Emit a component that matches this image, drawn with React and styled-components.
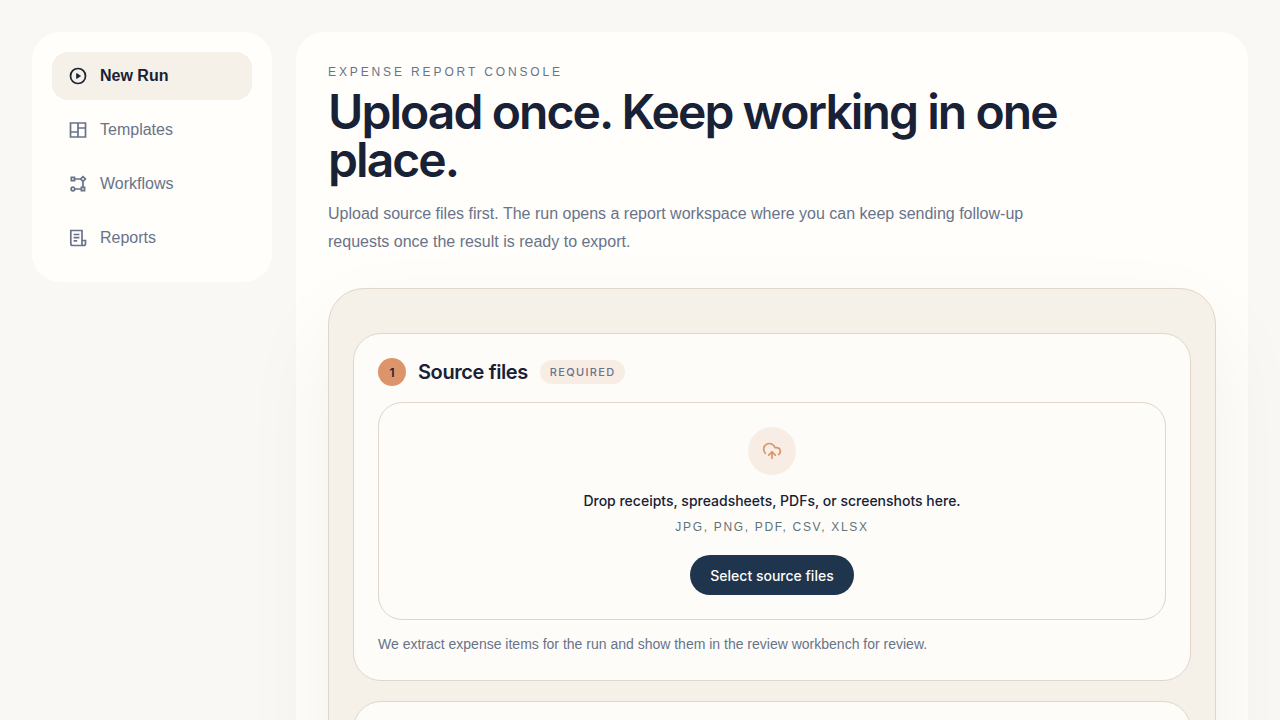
import styled, { createGlobalStyle } from "styled-components";
import { CloudUpload } from "lucide-react";

export default function NewRunPage() {
	return (
		<>
			<GlobalStyle />
			<Page>
				<Sidebar>
					<NavItem href="#new-run" $active aria-current="page">
						<RunIcon />
						New Run
					</NavItem>
					<NavItem href="#templates">
						<TemplatesIcon />
						Templates
					</NavItem>
					<NavItem href="#workflows">
						<WorkflowsIcon />
						Workflows
					</NavItem>
					<NavItem href="#reports">
						<ReportsIcon />
						Reports
					</NavItem>
				</Sidebar>
				<Main>
					<Eyebrow>Expense report console</Eyebrow>
					<Title>Upload once. Keep working in one place.</Title>
					<Intro>
						Upload source files first. The run opens a report workspace where you can keep sending follow-up
						requests once the result is ready to export.
					</Intro>
					<Steps>
						<Card>
							<CardHeader>
								<StepNumber>1</StepNumber>
								<h2>Source files</h2>
								<Tag>Required</Tag>
							</CardHeader>
							<DropZone>
								<UploadBadge>
									<CloudUpload size={20} strokeWidth={2} />
								</UploadBadge>
								<DropText>Drop receipts, spreadsheets, PDFs, or screenshots here.</DropText>
								<Formats>JPG, PNG, PDF, CSV, XLSX</Formats>
								<SelectButton type="button">Select source files</SelectButton>
							</DropZone>
							<Note>We extract expense items for the run and show them in the review workbench for review.</Note>
						</Card>
						<Card />
					</Steps>
				</Main>
			</Page>
		</>
	);
}

function RunIcon() {
	return (
		<NavIcon viewBox="0 0 20 20">
			<circle cx="10" cy="10" r="7.5" />
			<path d="M8.6 7.5v5l3.9-2.5z" fill="currentColor" strokeWidth="0.8" />
		</NavIcon>
	);
}

function TemplatesIcon() {
	return (
		<NavIcon viewBox="0 0 20 20">
			<path d="M2.5 3h15v14h-15zM10 3v14M2.5 12H10M10 8h7.5" />
		</NavIcon>
	);
}

function WorkflowsIcon() {
	return (
		<NavIcon viewBox="0 0 20 20">
			<path d="M3.3 3.4h3.2v3.2H3.3zM13.4 13.4h3.2v3.2h-3.2zM15 2.6 17.4 5 15 7.4 12.6 5zM6.5 5h6.1M15 7.4v6M6.6 15h6.8" />
			<circle cx="4.9" cy="15" r="1.8" />
		</NavIcon>
	);
}

function ReportsIcon() {
	return (
		<NavIcon viewBox="0 0 20 20">
			<path d="M14 12.5v-10H2.8v13c0 1.2.7 2 1.8 2h11.2M14 12.5h3.5v3.3c0 1-.7 1.7-1.7 1.7S14 16.8 14 15.8zM5.6 6.5h5.8M5.6 9.7h5.8M5.6 12.9h3.6" />
		</NavIcon>
	);
}

const GlobalStyle = createGlobalStyle`
	* {
		box-sizing: border-box;
		margin: 0;
	}
	body {
		background-color: #f9f8f4;
		color: #182135;
		font-family: "Liberation Sans", Arial, sans-serif;
		font-size: 16px;
		-webkit-font-smoothing: antialiased;
	}
`;

const Page = styled.div`
	display: flex;
	align-items: flex-start;
	gap: 24px;
	padding: 32px;
`;

const Sidebar = styled.nav`
	display: flex;
	flex-direction: column;
	flex: 0 0 240px;
	gap: 6px;
	padding: 20px;
	border-radius: 28px;
	background-color: #fffefa;
`;

const NavItem = styled.a`
	display: flex;
	align-items: center;
	gap: 12px;
	height: 48px;
	padding: 0 16px;
	border-radius: 16px;
	background-color: ${(props) => (props.$active ? "#f5f0e8" : "transparent")};
	color: ${(props) => (props.$active ? "#182135" : "#68738a")};
	font-weight: ${(props) => (props.$active ? 600 : 400)};
	text-decoration: none;
`;

const NavIcon = styled.svg`
	width: 20px;
	height: 20px;
	fill: none;
	stroke: currentColor;
	stroke-width: 1.7;
`;

const Main = styled.main`
	flex: 1;
	min-width: 0;
	padding: 32px;
	border-radius: 28px;
	background-color: #fffefa;
`;

const Eyebrow = styled.p`
	color: #68738a;
	font-size: 12px;
	line-height: 16px;
	letter-spacing: 0.24em;
	text-transform: uppercase;
`;

const Title = styled.h1`
	max-width: 768px;
	margin-top: 8px;
	font-family: Inter, "Liberation Sans", sans-serif;
	font-size: 48px;
	font-weight: 600;
	line-height: 48px;
	letter-spacing: -0.04em;
`;

const Intro = styled.p`
	max-width: 736px;
	margin-top: 16px;
	color: #68738a;
	line-height: 28px;
`;

const Steps = styled.section`
	display: flex;
	flex-direction: column;
	gap: 20px;
	margin-top: 32px;
	padding: 44px 24px 24px;
	border: 1px solid #e0d6ca;
	border-radius: 36px;
	background-color: #f5f0e8;
	box-shadow: 0 40px 96px rgba(24, 33, 53, 0.06);
`;

const Card = styled.div`
	min-height: 240px;
	padding: 24px;
	border: 1px solid #e0d6ca;
	border-radius: 28px;
	background-color: #fdfcf8;
`;

const CardHeader = styled.div`
	display: flex;
	align-items: center;
	gap: 12px;
	h2 {
		font-family: Inter, "Liberation Sans", sans-serif;
		font-size: 20px;
		font-weight: 600;
		line-height: 28px;
		letter-spacing: -0.02em;
	}
`;

const StepNumber = styled.span`
	display: flex;
	align-items: center;
	justify-content: center;
	width: 28px;
	height: 28px;
	border-radius: 50%;
	background-color: #dc946a;
	font-family: Inter, "Liberation Sans", sans-serif;
	font-size: 12px;
	font-weight: 600;
`;

const Tag = styled.span`
	padding: 4px 10px;
	border-radius: 12px;
	background-color: #f8ede5;
	color: #68738a;
	font-family: Inter, "Liberation Sans", sans-serif;
	font-size: 11px;
	font-weight: 500;
	line-height: 16px;
	letter-spacing: 0.12em;
	text-transform: uppercase;
`;

const DropZone = styled.div`
	display: flex;
	flex-direction: column;
	align-items: center;
	margin-top: 16px;
	padding: 24px;
	border: 1px solid #e0d6ca;
	border-radius: 24px;
`;

const UploadBadge = styled.div`
	display: flex;
	align-items: center;
	justify-content: center;
	width: 48px;
	height: 48px;
	border-radius: 50%;
	background-color: #f8ede5;
	color: #dc946a;
`;

const DropText = styled.p`
	margin-top: 16px;
	font-family: Inter, "Liberation Sans", sans-serif;
	font-size: 14px;
	font-weight: 500;
	line-height: 20px;
`;

const Formats = styled.p`
	margin-top: 8px;
	color: #5f7478;
	font-size: 12px;
	line-height: 16px;
	letter-spacing: 0.14em;
`;

const SelectButton = styled.button`
	height: 40px;
	margin-top: 20px;
	padding: 0 20px;
	border: 0;
	border-radius: 20px;
	background-color: #1f344d;
	color: #fdfcf8;
	font-family: Inter, "Liberation Sans", sans-serif;
	font-size: 14px;
	font-weight: 500;
	cursor: pointer;
`;

const Note = styled.p`
	margin-top: 12px;
	color: #68738a;
	font-size: 14px;
	line-height: 24px;
`;
